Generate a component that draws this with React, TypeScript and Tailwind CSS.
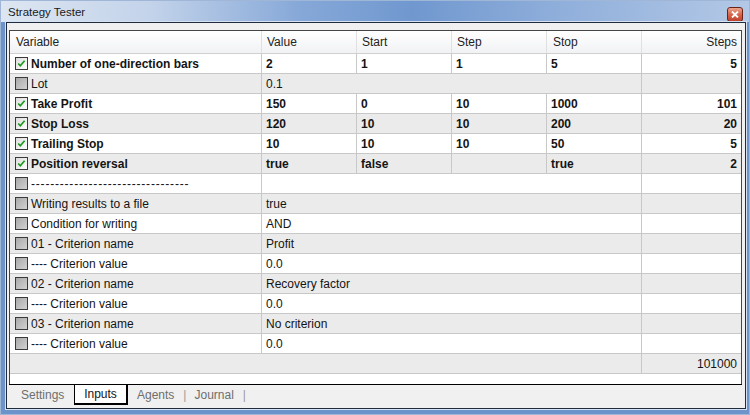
import React from "react";

type Row = {
  name: string;
  checked: boolean;
  value: string;
  range?: [string, string, string, string];
};

const rows: Row[] = [
  { name: "Number of one-direction bars", checked: true, value: "2", range: ["1", "1", "5", "5"] },
  { name: "Lot", checked: false, value: "0.1" },
  { name: "Take Profit", checked: true, value: "150", range: ["0", "10", "1000", "101"] },
  { name: "Stop Loss", checked: true, value: "120", range: ["10", "10", "200", "20"] },
  { name: "Trailing Stop", checked: true, value: "10", range: ["10", "10", "50", "5"] },
  { name: "Position reversal", checked: true, value: "true", range: ["false", "", "true", "2"] },
  { name: "---------------------------------", checked: false, value: "" },
  { name: "Writing results to a file", checked: false, value: "true" },
  { name: "Condition for writing", checked: false, value: "AND" },
  { name: "01 - Criterion name", checked: false, value: "Profit" },
  { name: "---- Criterion value", checked: false, value: "0.0" },
  { name: "02 - Criterion name", checked: false, value: "Recovery factor" },
  { name: "---- Criterion value", checked: false, value: "0.0" },
  { name: "03 - Criterion name", checked: false, value: "No criterion" },
  { name: "---- Criterion value", checked: false, value: "0.0" },
];

function CheckBox({ checked }: { checked: boolean }) {
  return (
    <div
      className={`w-[13px] h-[13px] border border-[#3a3a3a] flex-shrink-0 flex items-center justify-center ${
        checked
          ? "bg-[linear-gradient(135deg,#dcdcdc,#ffffff)]"
          : "bg-[linear-gradient(135deg,#a9a9a9,#d2d2d2)]"
      }`}
    >
      {checked && (
        <svg width="11" height="11" viewBox="0 0 11 11">
          <path d="M2.2 5.5 L4.3 7.8 L8.6 2.8" fill="none" stroke="#1d9a1d" strokeWidth="1.7" />
        </svg>
      )}
    </div>
  );
}

export default function App() {
  return (
    <div
      className="w-[750px] h-[415px] flex flex-col bg-[#6c93ca] border border-[#9fb6d6] text-[12px] text-[#141414] overflow-hidden"
      style={{ fontFamily: '"Liberation Sans", Arial, sans-serif' }}
    >
      {/* title bar */}
      <div className="h-[21px] flex items-center justify-between pl-[7px] pr-[6px] bg-[linear-gradient(90deg,#dde6f2_0%,#c3d3ea_20%,#86a8d8_40%,#7098cf_55%,#90afdb_75%,#b3c8e6_100%)]">
        <span className="text-[11.5px] text-[#1a1a1a] pt-[3px]">Strategy Tester</span>
        <div className="w-[16px] h-[15px] mt-[5px] rounded-[3px] border border-[#6a2416] bg-[linear-gradient(180deg,#eba48e_0%,#d7664c_50%,#c0402a_100%)] flex items-center justify-center">
          <svg width="8" height="7" viewBox="0 0 8 7">
            <path d="M1 0.5 L7 6.5 M7 0.5 L1 6.5" stroke="#ffffff" strokeWidth="1.8" />
          </svg>
        </div>
      </div>

      {/* body */}
      <div className="flex-1 pl-[5px] pr-[3px] pb-[5px] flex">
        <div className="flex-1 flex flex-col border border-[#1f2c3e] outline outline-1 outline-[#d6e2f1] bg-[#f0f0f0]">
          {/* grid */}
          <div className="mt-[7px] ml-[2px] mr-[3px] h-[354px] border-l border-t border-r border-[#454545] bg-white flex flex-col">
            {/* header */}
            <div className="h-[23px] flex border-b border-[#d0d0d0] bg-[linear-gradient(180deg,#ffffff,#f1f2f4)] text-[#222]">
              <div className="w-[252px] border-r border-[#e0e0e0] pl-[6px] flex items-center">Variable</div>
              <div className="w-[95px] border-r border-[#e0e0e0] pl-[5px] flex items-center">Value</div>
              <div className="w-[95px] border-r border-[#e0e0e0] pl-[5px] flex items-center">Start</div>
              <div className="w-[95px] border-r border-[#e0e0e0] pl-[5px] flex items-center">Step</div>
              <div className="w-[95px] border-r border-[#e0e0e0] pl-[6px] flex items-center">Stop</div>
              <div className="flex-1 pr-[4px] flex items-center justify-end">Steps</div>
            </div>

            {rows.map((r, i) => (
              <div
                key={i}
                className={`h-[20px] flex border-b border-[#c8c8c8] ${i % 2 ? "bg-[#ebebeb]" : "bg-white"} ${
                  r.checked ? "font-bold" : ""
                }`}
              >
                <div className="w-[252px] border-r border-[#c8c8c8] pl-[5px] flex items-center gap-[3px]">
                  <CheckBox checked={r.checked} />
                  <span className={r.name.startsWith("-----") ? "tracking-[0.8px]" : ""}>{r.name}</span>
                </div>
                {r.range ? (
                  <>
                    <div className="w-[95px] border-r border-[#c8c8c8] pl-[4px] flex items-center">{r.value}</div>
                    <div className="w-[95px] border-r border-[#c8c8c8] pl-[4px] flex items-center">{r.range[0]}</div>
                    <div className="w-[95px] border-r border-[#c8c8c8] pl-[4px] flex items-center">{r.range[1]}</div>
                    <div className="w-[95px] border-r border-[#c8c8c8] pl-[4px] flex items-center">{r.range[2]}</div>
                    <div className="flex-1 pr-[4px] flex items-center justify-end">{r.range[3]}</div>
                  </>
                ) : (
                  <>
                    <div className="w-[380px] border-r border-[#c8c8c8] pl-[4px] flex items-center">{r.value}</div>
                    <div className="flex-1" />
                  </>
                )}
              </div>
            ))}

            {/* total */}
            <div className="h-[20px] flex border-b border-[#c8c8c8] bg-[#ebebeb]">
              <div className="w-[632px] border-r border-[#c8c8c8]" />
              <div className="flex-1 pr-[4px] flex items-center justify-end">101000</div>
            </div>
          </div>

          {/* tabs */}
          <div className="ml-[2px] mr-[3px] h-[20px] border-t border-black flex items-start text-[#6e6e6e]">
            <div className="w-[65px] h-[20px] pl-[12px] flex items-center">Settings</div>
            <div className="w-[54px] h-[20px] bg-white border-l border-r-2 border-b-2 border-black text-[#141414] flex items-center justify-center">
              Inputs
            </div>
            <div className="h-[20px] pl-[9px] flex items-center">Agents</div>
            <div className="h-[20px] pl-[9px] flex items-center text-[#9a9a9a]">|</div>
            <div className="h-[20px] pl-[8px] flex items-center">Journal</div>
            <div className="h-[20px] pl-[9px] flex items-center text-[#9a9a9a]">|</div>
          </div>
        </div>
      </div>
    </div>
  );
}
